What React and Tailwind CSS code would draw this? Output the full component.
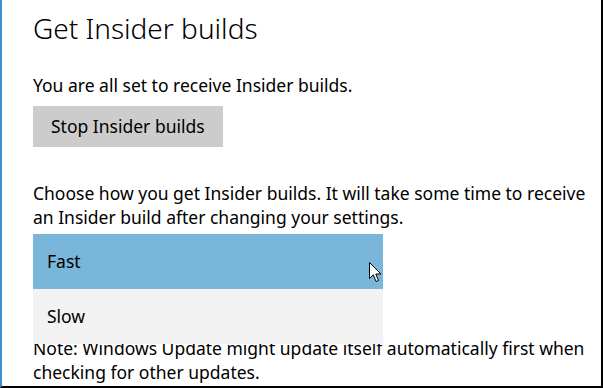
export default function App() {
  return (
    <div
      className="relative h-[388px] w-[603px] overflow-hidden border-b-2 border-l-2 border-r-2 border-b-black border-l-[#3d8fd1] border-r-black bg-white text-black"
      style={{ fontFamily: '"Noto Sans", "Open Sans", sans-serif' }}
    >
      <div className="pl-[31px] pt-[10px]">
        <h1 className="text-[28px] font-light leading-[36px]">Get Insider builds</h1>

        <p className="mt-[27px] text-[17.5px] leading-[24px]">
          You are all set to receive Insider builds.
        </p>

        <button className="mt-[9px] block h-[41px] w-[190px] bg-[#cccccc] pl-[18px] text-left text-[17.5px]">
          Stop Insider builds
        </button>

        <p className="mt-[34px] text-[17.5px] leading-[24px]">
          Choose how you get Insider builds. It will take some time to receive
          <br />
          an Insider build after changing your settings.
        </p>

        {/* Update speed dropdown (open) */}
        <div className="relative z-10 mt-[5px] w-[350px] text-[17.5px]">
          <div className="relative flex h-[55px] items-center bg-[#7ab6da] pl-[14px]">
            Fast
            <svg
              className="absolute left-[336px] top-[28px]"
              width="13"
              height="21"
              viewBox="0 0 13 21"
            >
              <path
                d="M0.5 0.5 L0.5 16.5 L4.3 12.8 L7 19.5 L9.5 18.5 L6.8 12 L12 12 Z"
                fill="white"
                stroke="black"
                strokeWidth="1"
                strokeLinejoin="miter"
              />
            </svg>
          </div>
          <div className="flex h-[55px] items-center bg-[#f2f2f2] pl-[14px]">Slow</div>
        </div>

        <p className="mt-[-8px] text-[17.5px] leading-[24px]">
          Note: Windows Update might update itself automatically first when
          <br />
          checking for other updates.
        </p>
      </div>
    </div>
  );
}
